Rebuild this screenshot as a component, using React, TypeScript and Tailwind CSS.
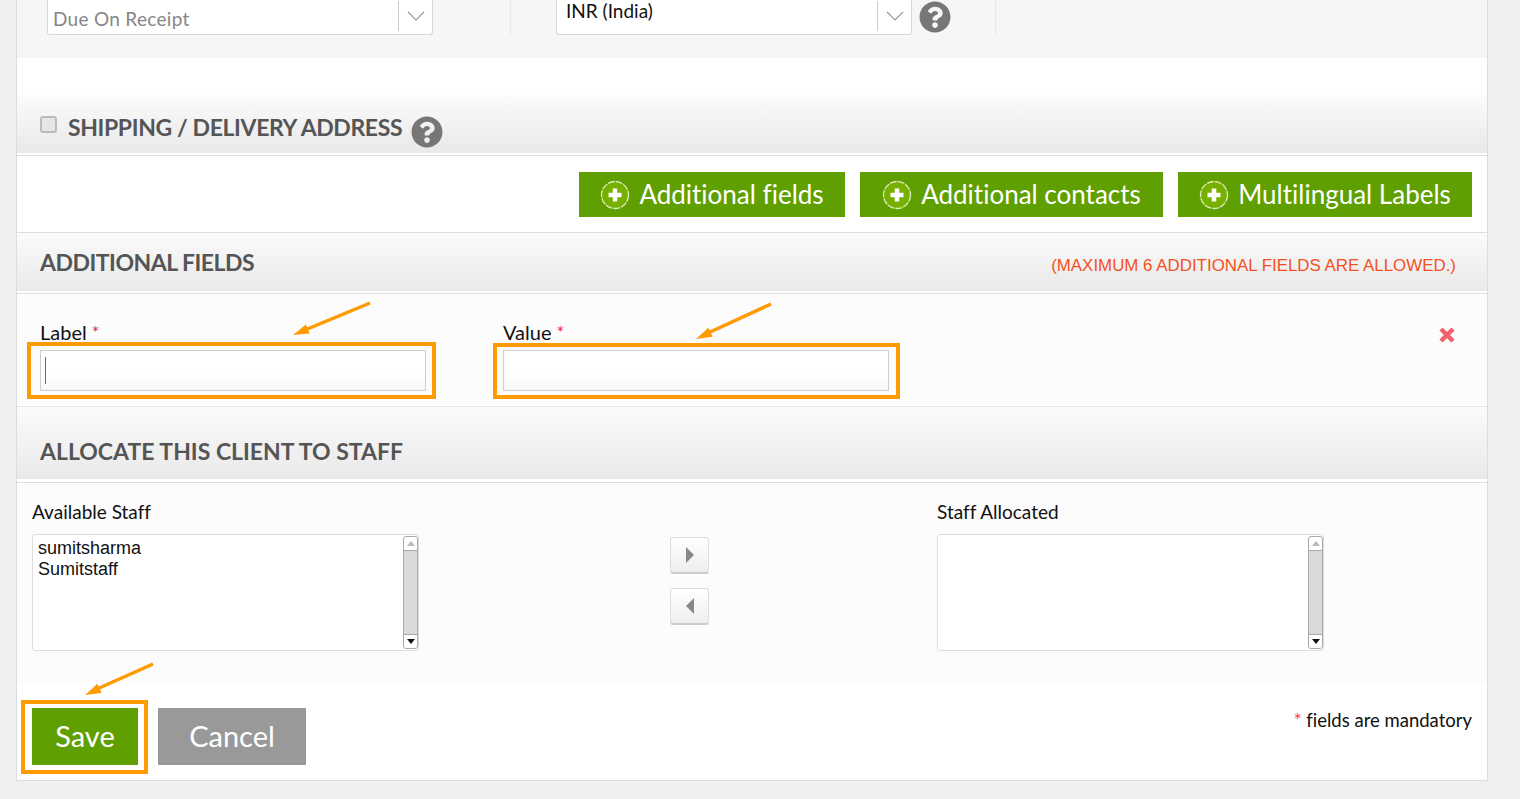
import { FaQuestionCircle } from "react-icons/fa"

const sans = "font-['Lato','Noto_Sans',sans-serif] [font-variant-ligatures:none]"

function Chevron() {
    return (
        <svg width="18" height="10" viewBox="0 0 18 10" fill="none" stroke="#999" strokeWidth="1.2">
            <path d="M1 1 L9 9 L17 1" />
        </svg>
    )
}

function SelectBox({ text, width, muted }: { text: string; width: string; muted?: boolean }) {
    return (
        <div className={`${width} h-[35px] flex bg-white border-x border-b border-[#d8d8d8] rounded-b-[3px]`}>
            <div className={`flex-1 text-[19px] leading-[22px] ${muted ? "pt-[8px] pl-[5px] text-[#868686] tracking-[0.3px]" : "pl-[9px] text-[#111]"}`}>{text}</div>
            <div className="w-[34px] h-[30px] mt-[1px] border-l border-[#ccc] flex items-center justify-center">
                <Chevron />
            </div>
        </div>
    )
}

function SectionHead({ title, tall, tracking, children }: { title: string; tall?: boolean; tracking?: string; children?: React.ReactNode }) {
    return (
        <div className={`border-b border-[#ddd] ${tall ? "h-[76px] pb-[3px]" : "h-[61px] pb-[2px]"}`}>
            <div className={`h-full bg-gradient-to-b from-[#fbfbfb] to-[#e9e9e9] flex pl-[23px] pr-[31px] justify-between ${tall ? "items-end pb-[14px]" : "items-center"}`}>
                <h3 className={`text-[23px] leading-[28px] font-bold text-[#555] ${tracking}`}>{title}</h3>
                {children}
            </div>
        </div>
    )
}

function PlusIcon() {
    return (
        <svg width="30" height="30" viewBox="0 0 30 30">
            <circle cx="15" cy="15" r="13.5" fill="#76b000" stroke="#dcecc0" strokeWidth="1.3" strokeDasharray="7 1" />
            <path d="M15 8.5 V21.5 M8.5 15 H21.5" stroke="#fff" strokeWidth="4.5" />
        </svg>
    )
}

function AddButton({ text, width }: { text: string; width: string }) {
    return (
        <button className={`${width} h-[45px] bg-[#5fa000] text-white text-[26px] leading-[45px] flex items-center justify-center gap-[9px]`}>
            <PlusIcon />
            <span>{text}</span>
        </button>
    )
}

function FieldInput({ label, width, box, caret }: { label: string; width: string; box: string; caret?: boolean }) {
    return (
        <div className={width}>
            <div className="h-[20px] text-[20px] leading-[20px] text-[#111]">
                {label} <span className="text-[#f0245f] text-[18px] align-top">*</span>
            </div>
            <div className="relative mt-[8px] h-[41px] border border-[#cfcfcf] bg-gradient-to-b from-white from-60% to-[#f6f6f6] pl-[4px] pt-[6px]">
                {caret && <div className="w-[1px] h-[27px] bg-[#666]" />}
                <div className={`absolute border-[4px] border-[#ff9a00] pointer-events-none ${box}`} />
            </div>
        </div>
    )
}

function StaffList({ label, width, items }: { label: string; width: string; items: string[] }) {
    return (
        <div className={width}>
            <div className="h-[22px] text-[19px] leading-[22px] text-[#111]">{label}</div>
            <div className="mt-[11px] h-[117px] bg-white border border-[#ddd] rounded-[3px] flex">
                <div className="flex-1 pl-[5px] pt-[3px] font-['Liberation_Sans',sans-serif] text-[18px] leading-[21px] text-[#111]">
                    {items.map((item) => (
                        <div key={item}>{item}</div>
                    ))}
                </div>
                <div className="w-[15px] my-[1px] flex flex-col border border-[#aaa] rounded-[3px] overflow-hidden bg-white">
                    <div className="h-[14px] border-b border-[#aaa] flex items-center justify-center">
                        <div className="border-x-[4px] border-x-transparent border-b-[5px] border-b-[#bbb]" />
                    </div>
                    <div className="flex-1 bg-[#dadada]" />
                    <div className="h-[14px] border-t border-[#aaa] flex items-center justify-center">
                        <div className="border-x-[4px] border-x-transparent border-t-[5px] border-t-[#111]" />
                    </div>
                </div>
            </div>
        </div>
    )
}

function ArrowButton({ dir }: { dir: "right" | "left" }) {
    return (
        <button className="w-[39px] h-[37px] rounded-[3px] border border-[#ddd] border-b-2 border-b-[#ccc] bg-gradient-to-b from-white to-[#eee] flex items-center justify-center">
            <svg width="8" height="16" viewBox="0 0 8 16" fill="#888">
                {dir == "right" ? <path d="M0 0 L8 8 L0 16 Z" /> : <path d="M8 0 L0 8 L8 16 Z" />}
            </svg>
        </button>
    )
}

export default function App() {
    return (
        <div className={`relative w-[1520px] h-[799px] overflow-hidden bg-[#f0f0f0] ${sans}`}>
            <div className="ml-[16px] w-[1472px] h-[781px] bg-white border-x border-b border-[#dcdcdc]">
                {/* cut off row of the form above */}
                <div className="h-[58px] bg-[#f7f6f4] flex">
                    <div className="ml-[30px]">
                        <SelectBox text="Due On Receipt" width="w-[386px]" muted />
                    </div>
                    <div className="ml-[77px] w-[1px] h-[35px] bg-[#e8e8e8]" />
                    <div className="ml-[45px]">
                        <SelectBox text="INR (India)" width="w-[356px]" />
                    </div>
                    <FaQuestionCircle className="ml-[7px] mt-[1px] text-[#777]" size={32} />
                    <div className="ml-[44px] w-[1px] h-[35px] bg-[#e8e8e8]" />
                </div>
                <div className="h-[37px]" />

                <SectionHead title="">
                    <div />
                </SectionHead>

                <div className="h-[77px] border-b border-[#ddd] pt-[16px] pr-[15px] flex justify-end gap-[15px]">
                    <AddButton text="Additional fields" width="w-[266px]" />
                    <AddButton text="Additional contacts" width="w-[303px]" />
                    <AddButton text="Multilingual Labels" width="w-[294px]" />
                </div>

                <SectionHead title="ADDITIONAL FIELDS" tracking="tracking-[-0.5px]">
                    <span className="mt-[7px] font-['Liberation_Sans',sans-serif] text-[16.9px] text-[#f4511e]">(MAXIMUM 6 ADDITIONAL FIELDS ARE ALLOWED.)</span>
                </SectionHead>

                <div className="h-[113px] border-b border-[#e6e6e6] bg-[#fcfcfc] pt-[28px] pl-[23px] flex">
                    <FieldInput label="Label" width="w-[386px]" box="-left-[14px] -right-[11px] -top-[9px] -bottom-[9px]" caret />
                    <div className="ml-[77px]">
                        <FieldInput label="Value" width="w-[386px]" box="-left-[11px] -right-[12px] -top-[8px] -bottom-[9px]" />
                    </div>
                    <svg className="ml-[550px] mt-[5px]" width="16" height="16" viewBox="0 0 16 16" stroke="#f4606a" strokeWidth="4.5">
                        <path d="M2 2 L14 14 M14 2 L2 14" />
                    </svg>
                </div>

                <SectionHead title="ALLOCATE THIS CLIENT TO STAFF" tall />

                <div className="h-[199px] bg-[#fcfcfc] pt-[18px] pl-[15px] flex">
                    <StaffList label="Available Staff" width="w-[387px]" items={["sumitsharma", "Sumitstaff"]} />
                    <div className="ml-[251px] pt-[36px] flex flex-col gap-[14px]">
                        <ArrowButton dir="right" />
                        <ArrowButton dir="left" />
                    </div>
                    <div className="ml-[228px]">
                        <StaffList label="Staff Allocated" width="w-[387px]" items={[]} />
                    </div>
                </div>

                <div className="h-[98px] pl-[15px] pr-[15px] pt-[26px] flex gap-[20px]">
                    <button className="relative w-[106px] h-[57px] pb-[2px] bg-[#5fa000] text-white text-[29px]">
                        Save
                        <div className="absolute -left-[11px] -right-[10px] -top-[8px] -bottom-[9px] border-[4px] border-[#ff9a00]" />
                    </button>
                    <button className="w-[148px] h-[57px] pb-[2px] bg-[#999] text-white text-[29px]">Cancel</button>
                    <div className="ml-auto text-[18.5px] leading-[24px] text-[#111]">
                        <span className="text-[#f44]">*</span> fields are mandatory
                    </div>
                </div>
            </div>

            {/* header with the checkbox and help icon */}
            <div className="absolute left-[40px] top-[113px] flex items-start">
                <div className="w-[17px] h-[17px] mt-[3px] rounded-[3px] border-2 border-[#bbb] bg-[#e6e6e6]" />
                <span className="ml-[11px] text-[23px] leading-[28px] font-bold text-[#555] tracking-[-0.38px]">SHIPPING / DELIVERY ADDRESS</span>
                <FaQuestionCircle className="ml-[9px] mt-[3px] text-[#777]" size={32} />
            </div>

            {/* orange annotation arrows */}
            <svg className="absolute left-0 top-0 pointer-events-none" width="1520" height="799" fill="#ff9a00" stroke="#ff9a00">
                <path d="M370 303 L305 330" strokeWidth="3.5" />
                <polygon points="293,335 309.7,333.6 305.9,324.4" stroke="none" />
                <path d="M771 304 L708 333" strokeWidth="3.5" />
                <polygon points="696,339 712.6,336.7 708.4,327.7" stroke="none" />
                <path d="M153 664 L97 689" strokeWidth="3.5" />
                <polygon points="85,695 101.7,693 97.5,683.8" stroke="none" />
            </svg>
        </div>
    )
}
